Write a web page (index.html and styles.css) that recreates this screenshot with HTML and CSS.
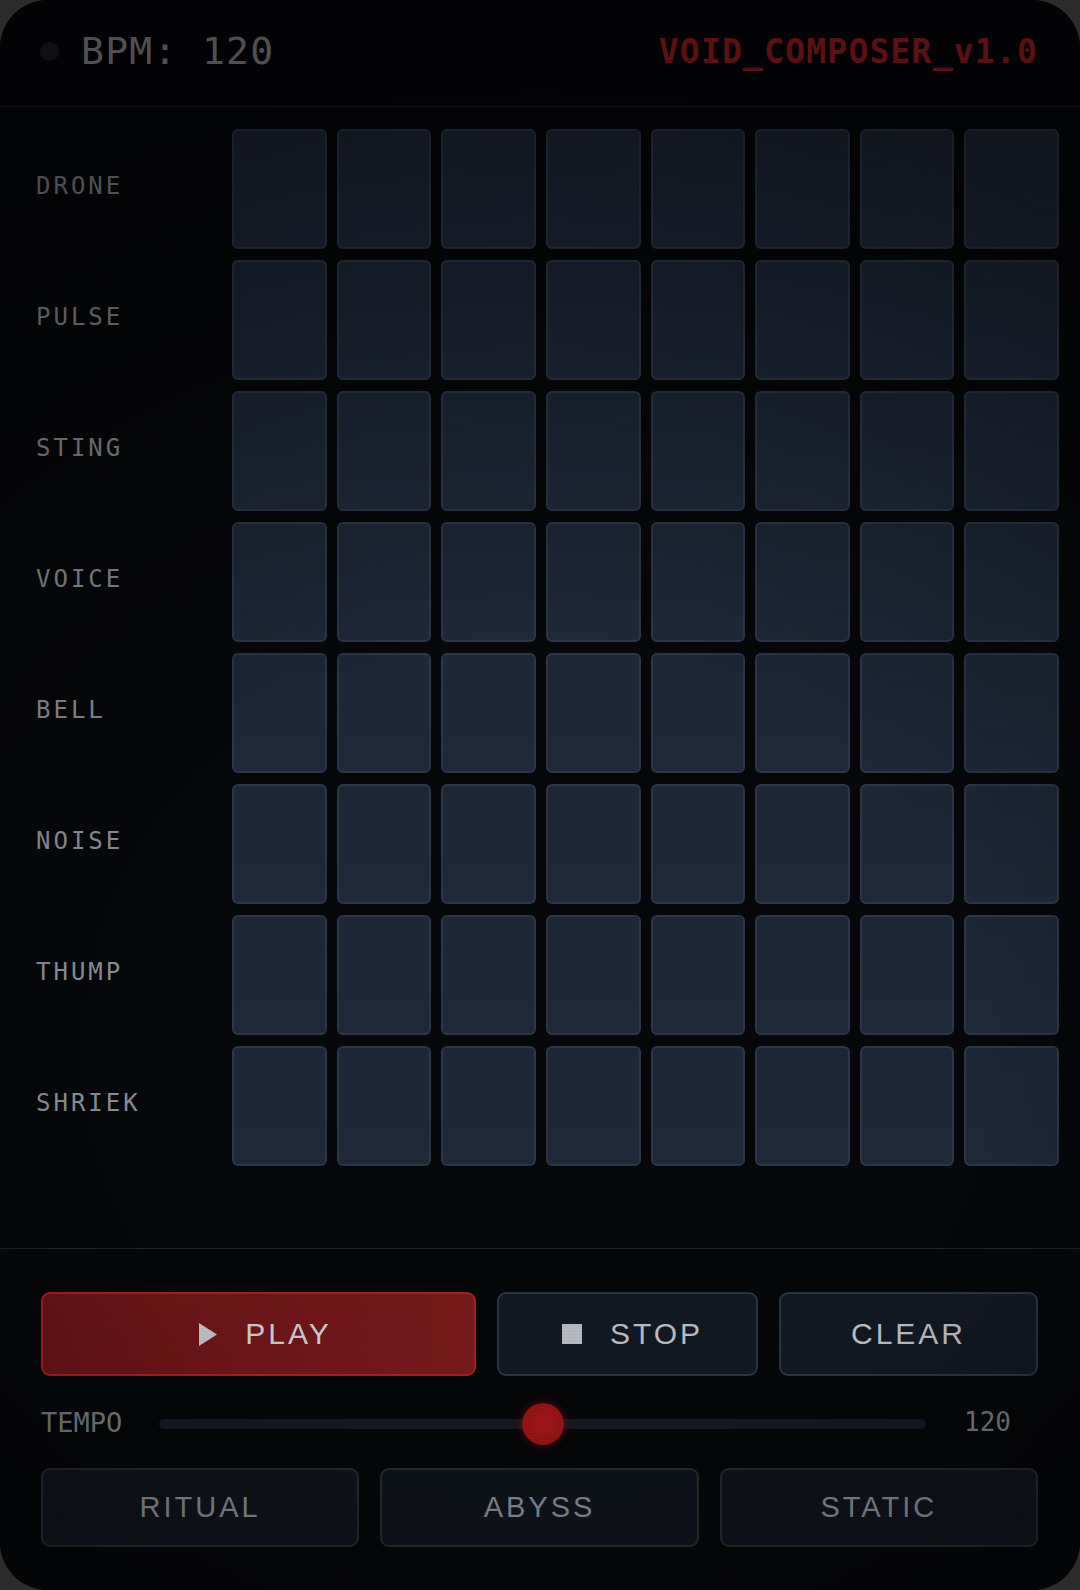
FILE: index.html
```html
<!DOCTYPE html>
<html lang="en">
<head>
<meta charset="utf-8">
<title>VOID_COMPOSER</title>
<link rel="stylesheet" href="styles.css">
</head>
<body>
<div class="panel">
  <header class="header">
    <div class="status">
      <span class="dot"></span>
      <span class="bpm">BPM: 120</span>
    </div>
    <div class="title">VOID_COMPOSER_v1.0</div>
  </header>

  <section class="grid">
    <div class="label">DRONE</div>
    <div class="cell"></div><div class="cell"></div><div class="cell"></div><div class="cell"></div><div class="cell"></div><div class="cell"></div><div class="cell"></div><div class="cell"></div>
    <div class="label">PULSE</div>
    <div class="cell"></div><div class="cell"></div><div class="cell"></div><div class="cell"></div><div class="cell"></div><div class="cell"></div><div class="cell"></div><div class="cell"></div>
    <div class="label">STING</div>
    <div class="cell"></div><div class="cell"></div><div class="cell"></div><div class="cell"></div><div class="cell"></div><div class="cell"></div><div class="cell"></div><div class="cell"></div>
    <div class="label">VOICE</div>
    <div class="cell"></div><div class="cell"></div><div class="cell"></div><div class="cell"></div><div class="cell"></div><div class="cell"></div><div class="cell"></div><div class="cell"></div>
    <div class="label">BELL</div>
    <div class="cell"></div><div class="cell"></div><div class="cell"></div><div class="cell"></div><div class="cell"></div><div class="cell"></div><div class="cell"></div><div class="cell"></div>
    <div class="label">NOISE</div>
    <div class="cell"></div><div class="cell"></div><div class="cell"></div><div class="cell"></div><div class="cell"></div><div class="cell"></div><div class="cell"></div><div class="cell"></div>
    <div class="label">THUMP</div>
    <div class="cell"></div><div class="cell"></div><div class="cell"></div><div class="cell"></div><div class="cell"></div><div class="cell"></div><div class="cell"></div><div class="cell"></div>
    <div class="label">SHRIEK</div>
    <div class="cell"></div><div class="cell"></div><div class="cell"></div><div class="cell"></div><div class="cell"></div><div class="cell"></div><div class="cell"></div><div class="cell"></div>
  </section>

  <section class="controls">
    <div class="transport">
      <button class="btn btn-play">
        <svg class="ico" width="18" height="23" viewBox="0 0 18 23"><path d="M0 0 L18 11.5 L0 23 Z" fill="#b9bcc2"/></svg>
        <span>PLAY</span>
      </button>
      <button class="btn btn-dark btn-stop">
        <svg class="ico" width="20" height="20" viewBox="0 0 20 20"><rect x="0" y="0" width="20" height="20" fill="#b5b8bf"/></svg>
        <span>STOP</span>
      </button>
      <button class="btn btn-dark btn-clear"><span>CLEAR</span></button>
    </div>

    <div class="tempo">
      <span class="tempo-label">TEMPO</span>
      <input class="slider" type="range" min="60" max="180" value="120">
      <span class="tempo-value">120</span>
    </div>

    <div class="presets">
      <button class="btn btn-preset">RITUAL</button>
      <button class="btn btn-preset">ABYSS</button>
      <button class="btn btn-preset">STATIC</button>
    </div>
  </section>
</div>
</body>
</html>
```

FILE: styles.css
```css
html, body {
  margin: 0;
  padding: 0;
}

body {
  background: #2c2c2c;
  width: 1080px;
  height: 1590px;
  overflow: hidden;
}

.panel {
  position: relative;
  width: 1080px;
  height: 1590px;
  border-radius: 48px;
  background: #07080b;
  overflow: hidden;
  display: flex;
  flex-direction: column;
  font-family: "DejaVu Sans Mono", monospace;
}

.panel::after {
  content: "";
  position: absolute;
  inset: 0;
  pointer-events: none;
  background:
    repeating-linear-gradient(180deg, rgba(0,0,0,0) 0px, rgba(0,0,0,0) 2px, rgba(0,0,0,0.06) 3px),
    radial-gradient(ellipse 100% 62% at 50% 66%, rgba(0,0,0,0) 42%, rgba(0,0,0,0.26) 75%, rgba(0,0,0,0.45) 100%);
  border-radius: 48px;
}

/* Header */
.header {
  height: 107px;
  flex: none;
  display: flex;
  align-items: center;
  justify-content: space-between;
  padding: 0 42px 4px 40px;
  box-sizing: border-box;
  border-bottom: 1px solid #1b2029;
  background: #06070a;
}

.status {
  display: flex;
  align-items: center;
  gap: 22px;
}

.dot {
  width: 19px;
  height: 19px;
  border-radius: 50%;
  background: #1d1e22;
}

.bpm {
  font-size: 38px;
  color: #929294;
  letter-spacing: 1.3px;
}

.title {
  font-size: 33px;
  font-weight: bold;
  color: #a81e22;
  letter-spacing: 1.2px;
}

/* Sequencer grid */
.grid {
  flex: none;
  display: grid;
  grid-template-columns: 186px repeat(8, 1fr);
  grid-auto-rows: 120px;
  column-gap: 10px;
  row-gap: 11px;
  padding: 22px 21px 82px 36px;
  border-bottom: 1px solid #1d2430;
}

.label {
  align-self: center;
  margin-top: -6px;
  font-size: 24px;
  letter-spacing: 3px;
  color: #8a8d92;
}

.cell {
  border: 2px solid #2d3749;
  border-radius: 6px;
  background: linear-gradient(180deg, #1e2737 0%, #20293a 100%);
}

/* Controls */
.controls {
  flex: 1;
  display: flex;
  flex-direction: column;
  padding: 43px 42px 0 41px;
  background: #060709;
}

.transport {
  display: flex;
  gap: 21px;
  height: 84px;
}

.btn {
  font-family: "Liberation Sans", Arial, sans-serif;
  border-radius: 9px;
  display: flex;
  align-items: center;
  justify-content: center;
  cursor: pointer;
  padding: 0;
  box-sizing: border-box;
}

.btn-play {
  flex: 0 0 435px;
  gap: 28px;
  padding-left: 14px;
  background: linear-gradient(90deg, #671416 0%, #6e1618 60%, #761b1c 100%);
  border: 2px solid #a81d20;
  color: #c9c9cb;
  font-size: 30px;
  letter-spacing: 3px;
}

.btn-dark {
  gap: 28px;
  background: #131923;
  border: 2px solid #2d3441;
  color: #b9bcc2;
  font-size: 30px;
  letter-spacing: 3px;
}

.btn-stop {
  flex: 0 0 261px;
  padding-left: 10px;
}

.btn-clear {
  flex: 1 1 0;
}

.ico {
  display: block;
  flex: none;
}

.tempo {
  height: 92px;
  display: grid;
  grid-template-columns: 118px 1fr 112px;
  align-items: center;
}

.tempo-label {
  font-size: 27px;
  color: #72767d;
  letter-spacing: 0;
}

.tempo-value {
  padding-left: 38px;
  font-size: 26px;
  color: #72767d;
}

.slider {
  -webkit-appearance: none;
  appearance: none;
  width: 100%;
  height: 10px;
  margin: 4px 0 0 0;
  border-radius: 5px;
  background: #131821;
  outline: none;
}

.slider::-webkit-slider-thumb {
  -webkit-appearance: none;
  appearance: none;
  width: 42px;
  height: 42px;
  border-radius: 50%;
  background: radial-gradient(circle at 50% 45%, #a0161a 0%, #8e1316 70%, #7d1114 100%);
  box-shadow: 0 0 10px rgba(160, 20, 24, 0.45);
  border: none;
}

.presets {
  display: flex;
  gap: 21px;
  height: 79px;
}

.btn-preset {
  flex: 1 1 0;
  background: #0f131a;
  border: 2px solid #23282f;
  color: #7d8189;
  font-size: 29px;
  letter-spacing: 3px;
}
```
